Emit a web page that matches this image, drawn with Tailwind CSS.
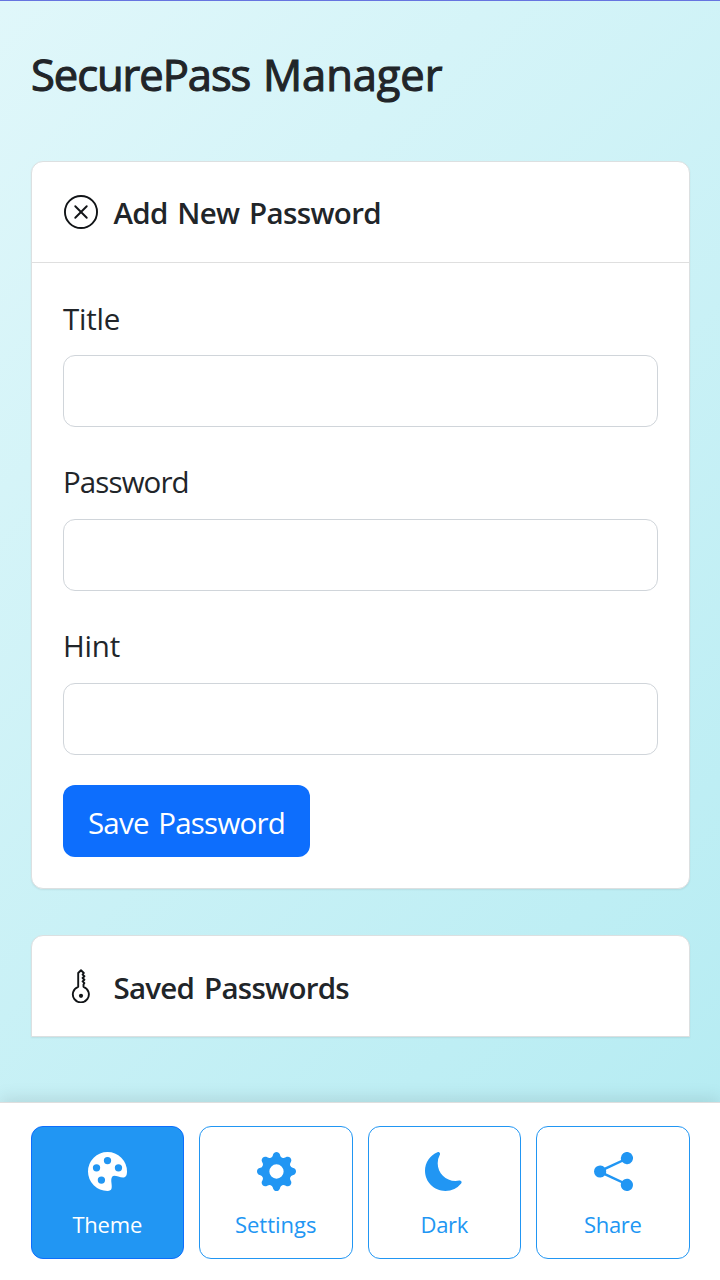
<!DOCTYPE html>
<html lang="en">
<head>
<meta charset="utf-8">
<title>SecurePass Manager</title>
<script src="https://cdn.jsdelivr.net/npm/@tailwindcss/browser@4"></script>
</head>
<body class="h-[1280px] w-[720px] overflow-hidden bg-white font-['Open_Sans','Noto_Sans',sans-serif] text-[#212529]">
<div class="flex h-full flex-col bg-linear-135 from-[#e0f7fa] to-[#b2ebf2]">
  <div class="h-px shrink-0 bg-[#6674e0]"></div>
  <main class="flex h-[1101px] shrink-0 flex-col pr-[30.5px] pl-[31px] pt-[44px]">
    <h1 class="h-[60px] text-[43.5px] leading-[60px] font-normal whitespace-nowrap [-webkit-text-stroke:1.1px_#212529]"><span class="tracking-[-1.05px] [word-spacing:2.5px]">SecurePass </span><span class="tracking-[-0.1px]">Manager</span></h1>

    <section class="mt-[56px] h-[728px] shrink-0 rounded-[12px] border border-[#dce0e1] bg-white shadow-[0_1px_2px_rgba(0,0,0,0.07)]">
      <header class="flex h-[101px] items-center border-b border-[#dfdfdf] pl-[32px]">
        <svg class="size-[34px]" viewBox="0 0 16 16" fill="none" stroke="#111417"><circle cx="8" cy="8" r="7.55" stroke-width=".9"/><path d="M5.3 5.3l5.4 5.4M10.700 5.300l-5.400 5.400" stroke-width=".9" stroke-linecap="round"/></svg>
        <h2 class="mt-[2px] ml-[15.5px] text-[29.5px] leading-[40px] font-semibold whitespace-nowrap tracking-[-0.65px] [word-spacing:2.5px]">Add New Password</h2>
      </header>
      <form class="flex flex-col px-[31px] pt-[32px]">
        <label class="h-[47px] leading-[47px] text-[29.5px] tracking-[-0.2px]">Title</label>
        <input class="mt-[13px] h-[72px] rounded-[12px] border-[1.5px] border-[#d0d5da] bg-white">
        <label class="mt-[31px] h-[47px] leading-[47px] text-[29.5px] tracking-[-0.9px]">Password</label>
        <input class="mt-[14px] h-[72px] rounded-[12px] border-[1.5px] border-[#d0d5da] bg-white">
        <label class="mt-[31px] h-[47px] leading-[47px] text-[29.5px] tracking-[-0.2px]">Hint</label>
        <input class="mt-[14px] h-[72px] rounded-[12px] border-[1.5px] border-[#d0d5da] bg-white">
        <button type="button" class="mt-[30px] flex h-[72px] w-[247px] items-center justify-center rounded-[12px] bg-[#0d6efd] pt-[4px] text-[29.5px] tracking-[-0.75px] [word-spacing:2.5px] whitespace-nowrap text-white">Save Password</button>
      </form>
    </section>

    <section class="mt-[46px] h-[102px] shrink-0 rounded-t-[12px] border border-[#dce0e1] bg-white shadow-[0_1px_2px_rgba(0,0,0,0.07)]">
      <header class="flex h-[101px] items-center pl-[32px]">
        <svg class="mb-[1px] size-[34px]" viewBox="0 0 34 34" fill="none" stroke="#111417" stroke-width="1.9" stroke-linejoin="round"><path d="M14.200 17.800V4L17 1.300L19.800 4L18.600 5.600L20.400 7.300L18.600 9L20.400 10.700L18.600 12.400L20.400 14.100L19.500 15.500V17.800A8 8 0 1 1 14.200 17.800Z"/><circle cx="17" cy="26.800" r="2.100" fill="#111417" stroke="none"/></svg>
        <h2 class="mt-[2px] ml-[15.5px] text-[29.5px] leading-[40px] font-semibold whitespace-nowrap tracking-[-0.75px] [word-spacing:3px]">Saved Passwords</h2>
      </header>
    </section>
  </main>

  <nav class="relative grid h-[178px] grid-cols-4 gap-[15px] border-t border-[#dedede] bg-white px-[30.5px] pt-[23px] pb-[21px] text-[22px] text-[#2196f3] shadow-[0_-4px_16px_rgba(0,0,0,0.1)]">
    <button class="flex flex-col items-center rounded-[12px] border-[1.5px] border-[#0d6efd] bg-[#2196f3] pt-[25px] text-white">
      <svg class="size-[39px]" viewBox="0 0 16 16" fill="currentColor"><path d="M12.433 10.07C14.133 10.585 16 11.15 16 8a8 8 0 1 0-8 8c1.996 0 1.826-1.504 1.649-3.08-.124-1.101-.252-2.237.351-2.92.465-.527 1.42-.237 2.433.07M8 5a1.5 1.5 0 1 1 0-3 1.5 1.5 0 0 1 0 3m4.5 3a1.5 1.5 0 1 1 0-3 1.5 1.5 0 0 1 0 3M5 6.5a1.5 1.5 0 1 1-3 0 1.5 1.5 0 0 1 3 0m.5 6.5a1.5 1.5 0 1 1 0-3 1.5 1.5 0 0 1 0 3"/></svg>
      <span class="mt-[16px] leading-[34px] tracking-[-0.2px]">Theme</span>
    </button>
    <button class="flex flex-col items-center rounded-[12px] border-[1.5px] border-[#2196f3] pt-[25px]">
      <svg class="ml-px size-[39px]" viewBox="0 0 16 16" fill="currentColor"><path d="M9.405 1.05c-.413-1.4-2.397-1.4-2.81 0l-.1.34a1.464 1.464 0 0 1-2.105.872l-.31-.17c-1.283-.698-2.686.705-1.987 1.987l.169.311c.446.82.023 1.841-.872 2.105l-.34.1c-1.4.413-1.4 2.397 0 2.81l.34.1a1.464 1.464 0 0 1 .872 2.105l-.17.31c-.698 1.283.705 2.686 1.987 1.987l.311-.169a1.464 1.464 0 0 1 2.105.872l.1.34c.413 1.4 2.397 1.4 2.81 0l.1-.34a1.464 1.464 0 0 1 2.105-.872l.31.17c1.283.698 2.686-.705 1.987-1.987l-.169-.311a1.464 1.464 0 0 1 .872-2.105l.34-.1c1.4-.413 1.4-2.397 0-2.81l-.34-.1a1.464 1.464 0 0 1-.872-2.105l.17-.31c.698-1.283-.705-2.686-1.987-1.987l-.311.169a1.464 1.464 0 0 1-2.105-.872zM8 10.93a2.929 2.929 0 1 1 0-5.86 2.929 2.929 0 0 1 0 5.858z"/></svg>
      <span class="mt-[16px] leading-[34px]">Settings</span>
    </button>
    <button class="flex flex-col items-center rounded-[12px] border-[1.5px] border-[#2196f3] pt-[25px]">
      <svg class="ml-px size-[39px]" viewBox="0 0 16 16" fill="currentColor"><path d="M6 .278a.77.77 0 0 1 .08.858 7.2 7.2 0 0 0-.878 3.46c0 4.021 3.278 7.277 7.318 7.277q.792-.001 1.533-.16a.79.79 0 0 1 .81.316.73.73 0 0 1-.031.893A8.35 8.35 0 0 1 8.344 16C3.734 16 0 12.286 0 7.71 0 4.266 2.114 1.312 5.124.06A.75.75 0 0 1 6 .278"/></svg>
      <span class="mt-[16px] leading-[34px] tracking-[-0.3px]">Dark</span>
    </button>
    <button class="flex flex-col items-center rounded-[12px] border-[1.5px] border-[#2196f3] pt-[25px]">
      <svg class="ml-px size-[39px]" viewBox="0 0 16 16" fill="currentColor"><path d="M11 2.5a2.5 2.5 0 1 1 .603 1.628l-6.718 3.12a2.5 2.5 0 0 1 0 1.504l6.718 3.12a2.5 2.5 0 1 1-.488.876l-6.718-3.12a2.5 2.5 0 1 1 0-3.256l6.718-3.12A2.5 2.5 0 0 1 11 2.5"/></svg>
      <span class="mt-[16px] leading-[34px] tracking-[-0.35px]">Share</span>
    </button>
  </nav>
</div>
</body>
</html>
